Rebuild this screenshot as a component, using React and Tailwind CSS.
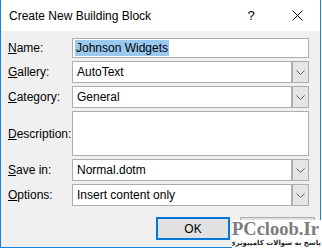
import React from "react";

const font = { fontFamily: '"Liberation Sans", Arial, sans-serif' };

const Label = ({ k, rest }) => (
  <div className="w-[71px] shrink-0 whitespace-nowrap pl-[7px] text-[12px] text-[#000]">
    <span className="underline">{k}</span>
    {rest}
  </div>
);

const Combo = ({ value }) => (
  <div className="flex h-[22px] w-[237px] border border-[#adadad] bg-white">
    <div className="flex flex-1 items-center pl-[4px] text-[12px] text-[#000]">{value}</div>
    <div className="flex w-[17px] items-center justify-center border-l-2 border-[#adadad] bg-[#e5e5e5]">
      <svg width="9" height="5" viewBox="0 0 9 5">
        <path d="M0.5 0.5 L4.5 4.5 L8.5 0.5" fill="none" stroke="#606060" strokeWidth="1" />
      </svg>
    </div>
  </div>
);

export default function App() {
  return (
    <div className="h-[248px] w-[322px] overflow-hidden bg-white" style={font}>
      <div className="relative flex h-[248px] w-[321px] flex-col border-b border-l border-r border-[#1883d7]">
        {/* title bar */}
        <div className="flex h-[31px] items-center bg-white pl-[8px] text-[12px] text-[#000]">
          <span className="flex-1">Create New Building Block</span>
          <span className="w-[46px] text-center text-[13px]">?</span>
          <span className="flex w-[46px] justify-center">
            <svg width="11" height="11" viewBox="0 0 11 11">
              <path d="M0.5 0.5 L10.5 10.5 M10.5 0.5 L0.5 10.5" stroke="#000" strokeWidth="1" />
            </svg>
          </span>
        </div>

        {/* body */}
        <div className="flex flex-1 flex-col gap-[3px] bg-[#f0f0f0] pt-[7px]">
          <div className="flex items-center">
            <Label k="N" rest="ame:" />
            <div className="flex h-[20px] w-[237px] items-center border border-[#adadad] bg-white pl-[2px] text-[12px]">
              <span className="bg-[#99c9ef] px-[1px] text-[#000] leading-[16px]">Johnson Widgets</span>
            </div>
          </div>
          <div className="flex items-center">
            <Label k="G" rest="allery:" />
            <Combo value="AutoText" />
          </div>
          <div className="flex items-center">
            <Label k="C" rest="ategory:" />
            <Combo value="General" />
          </div>
          <div className="flex items-center">
            <Label k="D" rest="escription:" />
            <div className="h-[45px] w-[237px] border border-[#adadad] bg-white" />
          </div>
          <div className="flex items-center">
            <Label k="S" rest="ave in:" />
            <Combo value="Normal.dotm" />
          </div>
          <div className="flex items-center">
            <Label k="O" rest="ptions:" />
            <Combo value="Insert content only" />
          </div>

          <div className="mt-[8px] flex gap-[10px] pl-[155px]">
            <button className="flex h-[23px] w-[74px] items-center justify-center border-2 border-[#0078d7] bg-[#e1e1e1] text-[12px] text-[#000]">
              OK
            </button>
            <button className="flex h-[23px] w-[75px] items-center justify-center border border-[#adadad] bg-[#e1e1e1] text-[12px] text-[#000]">
              Cancel
            </button>
          </div>
        </div>

        {/* watermark */}
        <div className="absolute bottom-[-1px] right-[-1px] flex h-[28px] w-[89px] flex-col items-start overflow-hidden bg-white">
          <div
            className="mt-[1px] whitespace-nowrap text-[18.5px] font-bold leading-[16px] text-[#7b7b7b]"
            style={{ fontFamily: '"Liberation Serif", "DejaVu Serif", serif' }}
          >
            PCcloob.Ir
          </div>
          <div
            dir="rtl"
            className="mt-[2px] w-full whitespace-nowrap text-[7px] font-bold leading-[9px] text-[#222]"
            style={{ fontFamily: '"DejaVu Sans", "Noto Sans", sans-serif' }}
          >
            پاسخ به سوالات کامپیوتری
          </div>
        </div>
      </div>
    </div>
  );
}
